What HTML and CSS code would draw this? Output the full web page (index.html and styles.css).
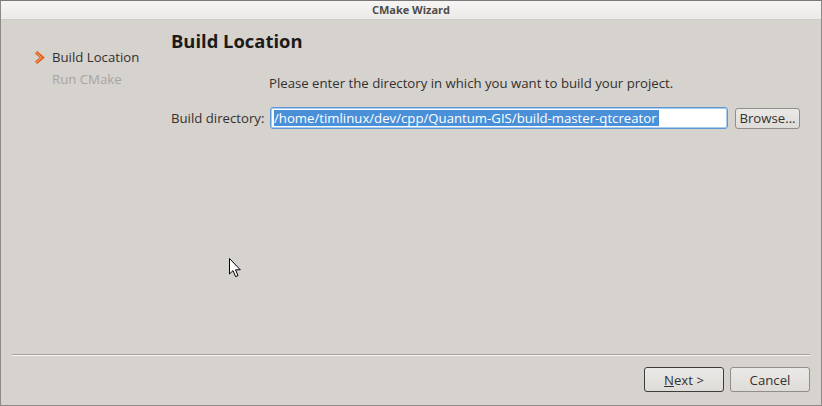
FILE: index.html
```html
<!DOCTYPE html>
<html>
<head>
<meta charset="utf-8">
<link rel="stylesheet" href="styles.css">
</head>
<body>
<div class="window">
  <div class="titlebar">CMake Wizard</div>
  <div class="content">
    <div class="sidebar">
      <div class="step current">
        <svg class="chev" width="11" height="13" viewBox="0 0 11 13"><path d="M2 1.2 L8.2 6.5 L2 11.8" fill="none" stroke="#e0601c" stroke-width="3.4" stroke-linejoin="miter"/><path d="M2 1.6 L7.6 6.5 L2 11.4" fill="none" stroke="#f6a56a" stroke-width="1"/></svg>
        <span>Build Location</span>
      </div>
      <div class="step todo"><span>Run CMake</span></div>
    </div>
    <div class="main">
      <h1 class="heading">Build Location</h1>
      <p class="desc">Please enter the directory in which you want to build your project.</p>
      <div class="row">
        <label class="lbl">Build directory:</label>
        <div class="input"><span class="sel">/home/timlinux/dev/cpp/Quantum-GIS/build-master-qtcreator</span></div>
        <button class="btn browse">Browse...</button>
      </div>
    </div>
  </div>
  <div class="footer">
    <div class="sep"></div>
    <div class="buttons">
      <button class="btn big default"><u>N</u>ext &gt;</button>
      <button class="btn big">Cancel</button>
    </div>
  </div>
  <svg class="cursor" width="13" height="20" viewBox="0 0 13 20"><path d="M0.5 0.5 L0.5 16 L4 12.6 L6.6 18.6 L9 17.6 L6.5 11.8 L11.3 11.8 Z" fill="#fff" stroke="#000" stroke-width="1"/></svg>
</div>
</body>
</html>
```
FILE: styles.css
```css
* { box-sizing: border-box; }
html, body { margin: 0; padding: 0; }
body {
  width: 822px;
  height: 406px;
  overflow: hidden;
  font-family: "Open Sans", "DejaVu Sans", sans-serif;
  font-size: 13.2px;
  color: #3c3b37;
}
.window {
  position: relative;
  width: 822px;
  height: 406px;
  border: 1px solid #8c8986;
  border-top-color: #7a7876;
  background: #d6d2ce;
  display: flex;
  flex-direction: column;
}
.titlebar {
  height: 19px;
  background: linear-gradient(#f6f5f4, #ebeae8);
  border-bottom: 1px solid #cfcbc8;
  text-align: center;
  font-weight: bold;
  font-size: 11px;
  line-height: 18px;
  color: #4d4c4a;
}
.content {
  flex: 1;
  display: flex;
}
.sidebar {
  width: 170px;
  padding: 26px 0 0 33px;
}
.step {
  height: 22px;
  display: flex;
  align-items: center;
}
.chev { flex: none; }
.step.current span { margin-left: 7px; color: #33312e; }
.step.todo span { margin-left: 18px; color: #a8a5a1; }
.main {
  flex: 1;
  padding-top: 8px;
  padding-right: 20px;
}
.heading {
  margin: 0;
  font-size: 18.4px;
  font-weight: bold;
  line-height: 26px;
  color: #1c1b19;
}
.desc {
  margin: 20px 0 0 98px;
  line-height: 18px;
  color: #33312e;
}
.row {
  margin-top: 15px;
  display: flex;
  align-items: center;
  height: 22px;
}
.lbl { flex: none; width: 99px; margin-left: 0; color: #33312e; }
.input {
  flex: none;
  width: 458px;
  height: 22px;
  background: #fff;
  border: 1px solid #5c97d3;
  border-radius: 3px;
  box-shadow: inset 0 0 0 1px #a8cbee;
  padding: 2px 0 0 3px;
  display: flex;
}
.sel {
  display: block;
  height: 16px;
  line-height: 16px;
  background: #4a90d9;
  color: #fff;
  padding-right: 2px;
  white-space: nowrap;
}
.btn {
  font-family: inherit;
  font-size: 13.2px;
  color: #33312e;
  background: linear-gradient(#ebe9e7, #dedbd8);
  border: 1px solid #918e8a;
  border-radius: 3px;
  padding: 0;
}
.browse {
  flex: none;
  width: 65px;
  height: 21px;
  margin-left: 7px;
  line-height: 18px;
}
.footer {
  height: 51px;
  padding: 0 11px 0 11px;
}
.sep {
  height: 2px;
  border-top: 1px solid #a5a29e;
  border-bottom: 1px solid #f7f6f5;
}
.buttons {
  display: flex;
  justify-content: flex-end;
  gap: 6px;
  margin-top: 11px;
}
.big {
  width: 80px;
  height: 25px;
}
.default { border-color: #3f3d3a; }
.cursor {
  position: absolute;
  left: 228px;
  top: 257px;
}
```
